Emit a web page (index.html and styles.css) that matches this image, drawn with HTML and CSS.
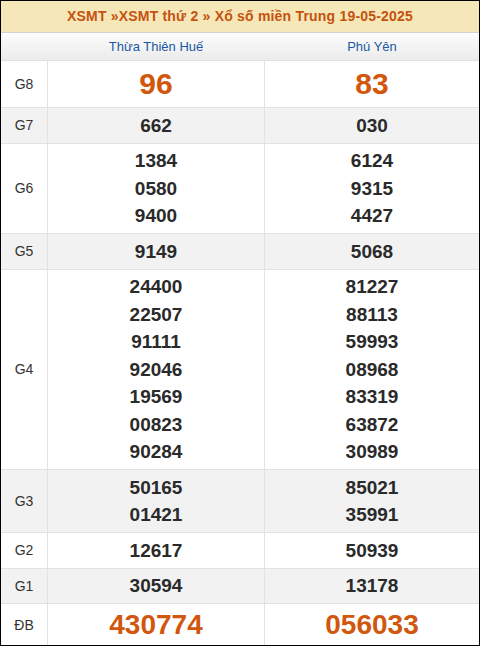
FILE: index.html
```html
<!DOCTYPE html>
<html lang="vi">
<head>
<meta charset="utf-8">
<link rel="stylesheet" href="styles.css">
</head>
<body>
<div class="box">
  <div class="title">XSMT »XSMT thứ 2 » Xổ số miền Trung 19-05-2025</div>
  <div class="heads">
    <div></div>
    <div class="prov">Thừa Thiên Huế</div>
    <div class="prov">Phú Yên</div>
  </div>
  <div class="grid">
    <div class="lbl">G8</div>
    <div class="cell big"><div>96</div></div>
    <div class="cell big"><div>83</div></div>

    <div class="lbl alt">G7</div>
    <div class="cell alt"><div>662</div></div>
    <div class="cell alt"><div>030</div></div>

    <div class="lbl">G6</div>
    <div class="cell"><div>1384</div><div>0580</div><div>9400</div></div>
    <div class="cell"><div>6124</div><div>9315</div><div>4427</div></div>

    <div class="lbl alt">G5</div>
    <div class="cell alt"><div>9149</div></div>
    <div class="cell alt"><div>5068</div></div>

    <div class="lbl">G4</div>
    <div class="cell"><div>24400</div><div>22507</div><div>91111</div><div>92046</div><div>19569</div><div>00823</div><div>90284</div></div>
    <div class="cell"><div>81227</div><div>88113</div><div>59993</div><div>08968</div><div>83319</div><div>63872</div><div>30989</div></div>

    <div class="lbl alt">G3</div>
    <div class="cell alt"><div>50165</div><div>01421</div></div>
    <div class="cell alt"><div>85021</div><div>35991</div></div>

    <div class="lbl">G2</div>
    <div class="cell"><div>12617</div></div>
    <div class="cell"><div>50939</div></div>

    <div class="lbl alt">G1</div>
    <div class="cell alt"><div>30594</div></div>
    <div class="cell alt"><div>13178</div></div>

    <div class="lbl">ĐB</div>
    <div class="cell db"><div>430774</div></div>
    <div class="cell db"><div>056033</div></div>
  </div>
</div>
</body>
</html>
```

FILE: styles.css
```css
html, body {
  margin: 0;
  padding: 0;
  background: #fff;
}
body {
  font-family: "Liberation Sans", Arial, sans-serif;
  color: #333;
}
.box {
  width: 480px;
  height: 646px;
  box-sizing: border-box;
  border: 1px solid #000;
  overflow: hidden;
}
.title {
  height: 31px;
  line-height: 31px;
  background: #f6e7b8;
  border-bottom: 1px solid #d2d2d2;
  text-align: center;
  font-weight: bold;
  font-size: 14px;
  letter-spacing: 0.2px;
  color: #c5520f;
}
.heads {
  display: grid;
  grid-template-columns: 46px 216px 214px;
  column-gap: 1px;
  height: 27px;
  line-height: 27px;
  background: linear-gradient(#fdfdfd, #ebebeb);
  border-bottom: 1px solid #e0e0e0;
}
.prov {
  text-align: center;
  font-size: 13px;
  color: #1a58a3;
}
.grid {
  display: grid;
  grid-template-columns: 46px 216px 214px;
  gap: 1px;
  background: #e2e2e2;
}
.lbl, .cell {
  background: #fff;
  display: flex;
  flex-direction: column;
  justify-content: center;
  align-items: center;
}
.alt {
  background: #f2f2f2;
}
.lbl {
  font-size: 14px;
  color: #333;
}
.cell {
  padding: 3.5px 0;
  line-height: 27.5px;
  font-size: 19px;
  font-weight: bold;
  color: #2a2a2a;
}
.cell.big {
  padding: 3px 0;
  line-height: 40px;
  font-size: 30px;
  color: #d0570d;
}
.cell.db {
  padding: 3px 0;
  line-height: 36px;
  font-size: 28px;
  color: #d0570d;
}
```
